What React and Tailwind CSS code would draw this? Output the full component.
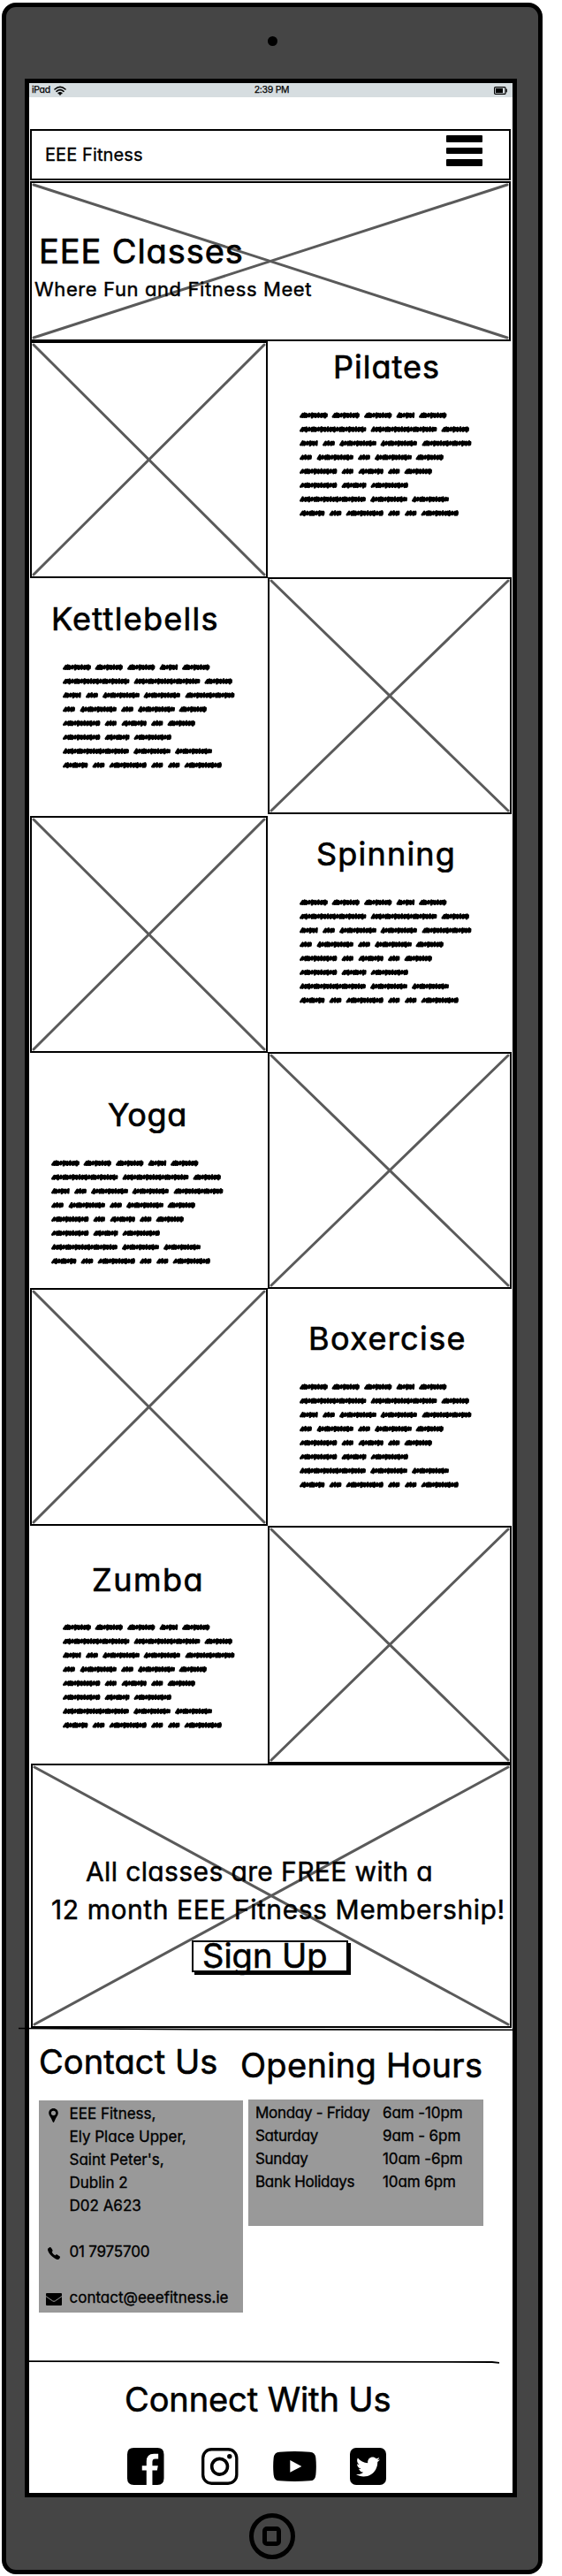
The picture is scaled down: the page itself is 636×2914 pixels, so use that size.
import React from "react";
import { FaTwitter } from "react-icons/fa";
import { IoCall } from "react-icons/io5";

// [start, end] of every scribbled word, row by row
const ROWS = [
  [[0, 32], [36.5, 68], [73, 104.5], [109.5, 130], [135, 166.5]],
  [[0, 75.5], [80.5, 155.5], [160.5, 192]],
  [[0, 20.5], [26, 40], [45, 87], [91.5, 133], [138.5, 194.5]],
  [[0, 14], [19.5, 61], [66, 80], [85, 127], [131.5, 163]],
  [[0, 42.5], [47.5, 61], [66.5, 95], [100, 113.5], [118.5, 150]],
  [[0, 42.5], [47.5, 75.5], [80.5, 123]],
  [[0, 75], [80, 122], [127, 169]],
  [[0, 28.5], [33.5, 47.5], [52.5, 95], [100, 113.5], [119, 132.5], [137.5, 180]],
];

function scribble(start, end, y) {
  let d = `M${start + 1.3} ${y + 1.5}`;
  let x = start + 1.3;
  let i = Math.round(end - start);
  while (x < end - 3.2) {
    const tall = i % 3 === 0 ? 2.3 : 1.8;
    d += `L${(x + 2.3).toFixed(1)} ${(y - tall).toFixed(1)}L${(x + 2).toFixed(1)} ${(y + tall - (i % 2) * 0.6).toFixed(1)}`;
    x += i % 4 < 2 ? 2.1 : 3.2;
    i += 1;
  }
  return d + `L${end - 1.3} ${y - 1.4}L${end - 1.5} ${y + 1}`;
}

function Scribbles({ className }) {
  return (
    <svg width="196" height="122" className={`block overflow-visible ${className}`} fill="none" stroke="#000" strokeWidth="2.6" strokeLinecap="round" strokeLinejoin="round">
      {ROWS.map((row, r) =>
        row.map(([a, b]) => <path key={`${r}-${a}`} d={scribble(a, b, 5 + r * 15.82)} />)
      )}
    </svg>
  );
}

function Placeholder({ className, children }) {
  return (
    <div className={`relative border-2 border-black ${className}`}>
      <svg className="absolute inset-[2px] h-[calc(100%-4px)] w-[calc(100%-4px)] overflow-visible" viewBox="0 0 100 100" preserveAspectRatio="none" stroke="#5a5a5a" strokeWidth="3" strokeLinecap="round">
        <line x1="0" y1="0" x2="100" y2="100" vectorEffect="non-scaling-stroke" />
        <line x1="100" y1="0" x2="0" y2="100" vectorEffect="non-scaling-stroke" />
      </svg>
      {children && <div className="relative">{children}</div>}
    </div>
  );
}

function ClassCard({ title, className, titleClass, textClass }) {
  return (
    <section className={className}>
      <h2 className={`text-[36px] leading-[36px] [-webkit-text-stroke:0.7px_#000] ${titleClass}`}>{title}</h2>
      <Scribbles className={textClass} />
    </section>
  );
}

function StatusBar() {
  return (
    <div className="grid h-4 grid-cols-3 items-center bg-[#d6dde0] px-[3px] text-[10.5px] leading-4 [-webkit-text-stroke:0.25px_#000]">
      <div className="flex items-center gap-1">
        <span className="tracking-[-0.3px]">iPad</span>
        <svg width="14" height="11" viewBox="0 0 14 11" fill="none" stroke="#000" strokeWidth="1.6" strokeLinecap="round">
          <path d="M1 4Q7 -1.4 13 4M3 6.3Q7 2.9 11 6.3M5.2 8.4Q7 7 8.8 8.4" />
          <circle cx="7" cy="9.3" r="0.6" />
        </svg>
      </div>
      <span className="pl-[2px] text-center tracking-[-0.3px]">2:39 PM</span>
      <svg className="mr-[3px] justify-self-end" width="15" height="9" viewBox="0 0 15 9">
        <rect x="0.6" y="0.6" width="12.4" height="7.8" rx="1" fill="none" stroke="#000" strokeWidth="1.2" />
        <rect x="2" y="2" width="8" height="5" />
        <rect x="13.5" y="2.6" width="1.3" height="3.8" rx="0.6" />
      </svg>
    </div>
  );
}

const HOURS = [
  ["Monday - Friday", "6am -10pm"],
  ["Saturday", "9am - 6pm"],
  ["Sunday", "10am -6pm"],
  ["Bank Holidays", "10am 6pm"],
];

function Row({ icon, children }) {
  return (
    <div className="flex h-[26px] items-center">
      <span className="flex w-[34.5px] justify-center pt-[3px] pr-[1px]">{icon}</span>
      <span>{children}</span>
    </div>
  );
}

const pin = (
  <svg width="11" height="16" viewBox="0 0 11 16">
    <path fillRule="evenodd" d="M5.5 0C8.6 0 10.8 2.3 10.8 5.2C10.8 7.6 9 9.6 8 11.5L6.3 15.2Q5.5 16.6 4.7 15.2L3 11.5C2 9.6 0.2 7.6 0.2 5.2C0.2 2.3 2.4 0 5.5 0ZM5.5 2.7A2.6 2.6 0 1 0 5.5 7.9A2.6 2.6 0 1 0 5.5 2.7Z" />
  </svg>
);

const envelope = (
  <svg width="18" height="14" viewBox="0 0 18 14">
    <rect width="18" height="14" rx="1" />
    <path d="M0 3.6L7.6 8.9Q9 9.8 10.4 8.9L18 3.6" fill="none" stroke="#999" strokeWidth="1" />
  </svg>
);

function Footer() {
  return (
    <footer>
      <div className="flex items-start">
        <div className="ml-[11px] w-[237px]">
          <h2 className="mt-[16px] text-[38px] leading-[38px] tracking-[0.1px] [-webkit-text-stroke:0.6px_#000]">Contact Us</h2>
          <div className="mt-[25px] h-60 w-[231px] bg-[#999] pt-[2px] text-[17px] leading-[26px] [-webkit-text-stroke:0.35px_#000]">
            <Row icon={pin}>EEE Fitness,</Row>
            <Row>Ely Place Upper,</Row>
            <Row>Saint Peter's,</Row>
            <Row>Dublin 2</Row>
            <Row>D02 A623</Row>
            <Row />
            <Row icon={<IoCall size={16} />}>
              <span className="tracking-[-0.2px]">01 7975700</span>
            </Row>
            <Row />
            <Row icon={envelope}>contact@eeefitness.ie</Row>
          </div>
        </div>
        <div className="w-[290px]">
          <h2 className="mt-[20px] ml-[-9px] text-[38px] leading-[38px] tracking-[0.3px] [-webkit-text-stroke:0.6px_#000]">Opening Hours</h2>
          <div className="mt-[20px] h-[143px] w-[266px] bg-[#999] pt-[2px] pl-2 text-[17px] leading-[26px] [-webkit-text-stroke:0.35px_#000]">
            {HOURS.map(([day, time]) => (
              <div key={day} className="grid grid-cols-[144px_1fr]">
                <span className="tracking-[-0.3px]">{day}</span>
                <span className="tracking-[-0.1px]">{time}</span>
              </div>
            ))}
          </div>
        </div>
      </div>

      <svg className="mt-[53px] block" width="534" height="5" viewBox="0 0 534 5">
        <path d="M0 2.2L330 2.6L524 3L532 3.8" fill="none" stroke="#000" strokeWidth="1.8" />
      </svg>

      <h2 className="mt-[21px] ml-[108px] text-[38px] leading-[38px] tracking-[-0.1px] [-webkit-text-stroke:0.6px_#000]">Connect With Us</h2>

      <div className="mt-[36px] ml-[111px] flex h-[42px] items-center">
        <svg width="41.5" height="42" viewBox="0 0 124 125">
          <path d="M22 0H102Q124 0 124 22V103Q124 125 102 125H85V76H101L104 60H85V47Q85 37 95 37H105V20H90Q65 20 65 46V60H50V76H65V125H22Q0 125 0 103V22Q0 0 22 0Z" />
        </svg>
        <svg className="ml-[42.5px]" width="41.5" height="42" viewBox="0 0 124 125" fill="none" stroke="#000">
          <rect x="5" y="5" width="114" height="115" rx="29" strokeWidth="10" />
          <circle cx="61.5" cy="63" r="26.5" strokeWidth="11" />
          <circle cx="95" cy="29" r="8" fill="#000" stroke="none" />
        </svg>
        <svg className="ml-[39px]" width="49" height="34" viewBox="0 0 147 102">
          <path d="M22 2Q73 -2 125 2Q143 3 145 22Q148 51 145 80Q143 99 125 100Q73 104 22 100Q4 99 2 80Q-1 51 2 22Q4 3 22 2Z" />
          <path d="M58 30L97 51L58 71Z" fill="#fff" />
        </svg>
        <div className="ml-[38px] flex h-[42px] w-[41.5px] items-center justify-center rounded-[7px] bg-black">
          <FaTwitter size={27} color="#fff" />
        </div>
      </div>
    </footer>
  );
}

export default function App() {
  return (
    <div className="h-[2914px] w-[636px] bg-white pt-[3px] pl-[2px] font-['Inter',sans-serif] whitespace-nowrap text-black [font-feature-settings:'cv11'_1]">
      <div className="flex h-[2909px] w-[612px] flex-col items-center rounded-[16px] border-[5px] border-black bg-[#454545]">
        <div className="mt-[33px] h-[11px] w-[11px] rounded-full bg-black" />
        <div className="mt-[37px] mr-[3px] h-[2736px] w-[557px] border-[5px] border-black bg-white">
          <StatusBar />

          <header className="mt-[36px] ml-px flex h-[58px] w-[544px] items-start justify-between border-2 border-black pr-[30px] pl-[15px]">
            <span className="mt-[13px] text-[20px] leading-[28px] tracking-[0.1px] [-webkit-text-stroke:0.35px_#000]">EEE Fitness</span>
            <span className="mt-[5px] flex w-[41px] flex-col gap-[6px]">
              <span className="h-[7.5px] rounded-[1px] bg-black" />
              <span className="h-[7.5px] rounded-[1px] bg-black" />
              <span className="h-[7.5px] rounded-[1px] bg-black" />
            </span>
          </header>

          <Placeholder className="mt-px ml-px h-[181px] w-[544px]">
            <h1 className="pt-[58px] pl-[8px] text-[38px] leading-[38px] tracking-[0.9px] [-webkit-text-stroke:0.7px_#000]">EEE Classes</h1>
            <p className="mt-[10px] pl-[3px] text-[22px] leading-[28px] tracking-[0.6px] [-webkit-text-stroke:0.45px_#000]">Where Fun and Fitness Meet</p>
          </Placeholder>

          <main className="grid h-[1609px] grid-cols-[270px_277px]">
            <div>
              <Placeholder className="ml-px h-[268px]" />
              <ClassCard title="Kettlebells" className="h-[269px] pt-[28px]" titleClass="ml-[25px] tracking-[1.3px]" textClass="mt-[32px] ml-[38px]" />
              <Placeholder className="ml-px h-[268px]" />
              <ClassCard title="Yoga" className="h-[266px] pt-[52px]" titleClass="ml-[89px] tracking-[0.6px]" textClass="mt-[32px] ml-[25px]" />
              <Placeholder className="ml-px h-[269px]" />
              <ClassCard title="Zumba" className="h-[269px] pt-[43px]" titleClass="ml-[71px] tracking-[1.5px]" textClass="mt-[31px] ml-[38px]" />
            </div>
            <div>
              <ClassCard title="Pilates" className="h-[267px] pt-[11px]" titleClass="ml-[74px] tracking-[1px]" textClass="mt-[32px] ml-[36px]" />
              <Placeholder className="mr-px h-[268px]" />
              <ClassCard title="Spinning" className="h-[269px] pt-[27px]" titleClass="ml-[55px] tracking-[1.2px]" textClass="mt-[32px] ml-[36px]" />
              <Placeholder className="mr-px h-[268px]" />
              <ClassCard title="Boxercise" className="h-[268px] pt-[38px]" titleClass="ml-[46px] tracking-[1.4px]" textClass="mt-[32px] ml-[36px]" />
              <Placeholder className="mr-px h-[269px]" />
            </div>
          </main>

          <Placeholder className="ml-[2px] h-[299px] w-[544px]">
            <p className="pt-[99px] pl-[60px] text-[30px] leading-[43px] tracking-[0.38px] [-webkit-text-stroke:0.5px_#000]">All classes are FREE with a</p>
            <p className="pl-[21px] text-[30px] leading-[43px] tracking-[0.57px] [-webkit-text-stroke:0.5px_#000]">12 month EEE Fitness Membership!</p>
            <button className="mt-[13px] ml-[180px] block h-[36px] w-[177px] border-2 border-black bg-white pl-[10px] text-left text-[38px] leading-[30px] shadow-[3px_3px_0_#000] [-webkit-text-stroke:0.6px_#000]">
              <span className="block h-[34px] leading-[30px]">Sign Up</span>
            </button>
          </Placeholder>
          <svg className="-ml-[12px] block overflow-visible" width="560" height="3" viewBox="0 0 560 3">
            <path d="M0 0.5L200 1.6L559 2.2" fill="none" stroke="#000" strokeWidth="1.6" />
          </svg>

          <Footer />
        </div>
        <div className="mt-[18px] mr-px flex h-[52px] w-[52px] items-center justify-center rounded-full border-[5px] border-black">
          <div className="h-[22px] w-[21px] rounded-[5px] border-[5px] border-black" />
        </div>
      </div>
    </div>
  );
}
